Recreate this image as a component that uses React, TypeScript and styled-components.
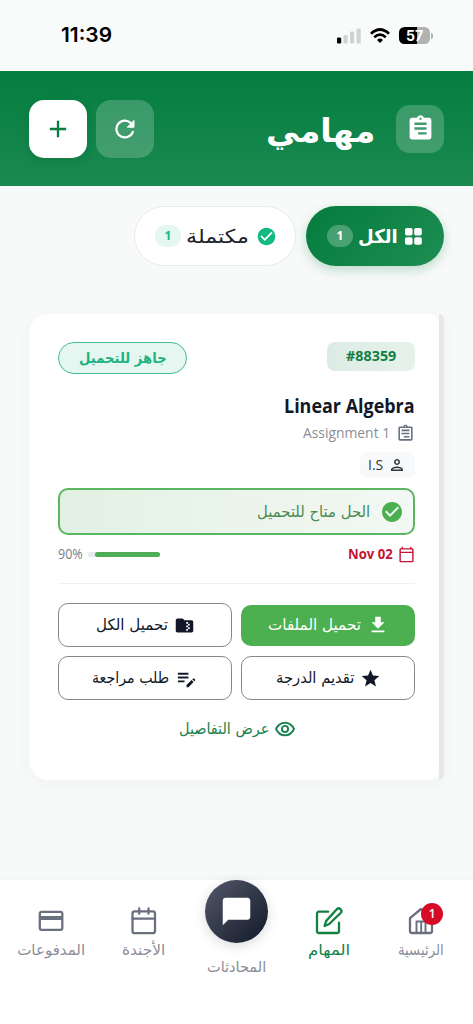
import React, { useLayoutEffect, useRef, useState } from 'react';
import styled, { createGlobalStyle, css } from 'styled-components';
import {
  MdAdd, MdAssignment, MdCheckCircle, MdChatBubble, MdEditNote, MdFolderZip,
  MdOutlineAssignment, MdOutlineCalendarToday, MdOutlinePerson, MdStar, MdDownload,
} from 'react-icons/md';

const green = '#047f40';
const ink = '#131828';
const grey = '#8b8e98';

const Global = createGlobalStyle`
  * { box-sizing: border-box; }
  body { margin: 0; background: #f8f9fa; font-family: 'Open Sans', 'DejaVu Sans', sans-serif; color: ${ink}; }
  svg { display: block; flex: none; }
  button { font: inherit; color: inherit; margin: 0; }
`;

/* Text set to a fixed measure so labels keep their width in any fallback face. */
const FitBox = styled.span<{ $w: number; $size: number; $weight: number; $face: string; $shift: number }>`
  display: inline-flex;
  flex: none;
  width: ${p => p.$w}px;
  height: ${p => p.$size}px;
  line-height: ${p => p.$size}px;
  direction: ltr;
  align-items: center;
  font-size: ${p => p.$size}px;
  font-weight: ${p => p.$weight};
  font-family: ${p => p.$face};
  margin-top: ${p => p.$shift * 2}px;
`;
const FitInner = styled.span`
  flex: none;
  white-space: nowrap;
  transform-origin: left center;
`;

const arabicFace = "'DejaVu Sans', sans-serif";
const latinFace = "'Open Sans', 'Noto Sans', sans-serif";

type FitProps = { children: string; w: number; size: number; weight?: number; shift?: number; face?: string };
function Fit({ children, w, size, weight = 400, shift, face }: FitProps) {
  const ref = useRef<HTMLSpanElement>(null);
  const [k, setK] = useState(1);
  useLayoutEffect(() => {
    if (ref.current) setK(w / ref.current.offsetWidth);
  }, [w]);
  const ar = /[\u0600-\u06ff]/.test(children);
  return (
    <FitBox $w={w} $size={size} $weight={weight} $face={face ?? (ar ? arabicFace : latinFace)} $shift={shift ?? (ar ? 0.75 : 0)}>
      <FitInner ref={ref} dir={ar ? 'rtl' : 'ltr'} style={{ transform: `scaleX(${k})` }}>{children}</FitInner>
    </FitBox>
  );
}

const Screen = styled.div`
  width: 473px;
  height: 1024px;
  display: flex;
  flex-direction: column;
  overflow: hidden;
  background: #f8faf9;
`;

const StatusBar = styled.div`
  height: 71px;
  flex: none;
  display: flex;
  align-items: center;
  justify-content: space-between;
  padding: 0 40px 0 61px;
  background: #f9fbfa;
  color: #000;
`;
const Signals = styled.div`
  display: flex;
  align-items: center;
  gap: 9px;
`;
const Battery = styled.div`
  display: flex;
  align-items: center;
  gap: 1px;
`;
const Cell = styled.div`
  width: 31px;
  height: 17px;
  border-radius: 5.5px;
  background: linear-gradient(90deg, #000 57%, #b1b3b3 57%);
  color: #fff;
  text-align: center;
  font: 700 14px/17px Inter, sans-serif;
`;
const Cap = styled.div`
  width: 2px;
  height: 6px;
  border-radius: 0 2px 2px 0;
  background: #b1b3b3;
`;

const Header = styled.header`
  height: 115px;
  flex: none;
  display: flex;
  direction: rtl;
  align-items: center;
  padding: 0 29px;
  background: linear-gradient(180deg, #047e3f, #1b8950);
`;
const TitleIcon = styled.div`
  width: 48px;
  height: 48px;
  border-radius: 14px;
  display: grid;
  place-items: center;
  background: rgba(255, 255, 255, 0.2);
  color: #fff;
  margin-left: 21px;
  svg { transform: scaleX(-1); }
`;
const Title = styled.h1`
  margin: 0;
  display: flex;
  flex: 1;
  color: #fff;
`;
const Actions = styled.div`
  display: flex;
  gap: 9px;
`;
const Action = styled.button<{ $solid?: boolean }>`
  width: 58px;
  height: 58px;
  padding: 0;
  border: 0;
  border-radius: 15px;
  display: grid;
  place-items: center;
  background: ${p => (p.$solid ? '#fff' : 'rgba(255,255,255,.2)')};
  color: ${p => (p.$solid ? green : '#fff')};
  ${p => p.$solid && css`box-shadow: 0 3px 9px rgba(0, 0, 0, 0.1);`}
`;

const Tabs = styled.div`
  display: flex;
  direction: rtl;
  gap: 10px;
  padding: 20px 29px 0;
  height: 128px;
  flex: none;
`;
const Tab = styled.button<{ $active?: boolean }>`
  width: ${p => (p.$active ? 138 : 162)}px;
  height: 60px;
  border-radius: 30px;
  display: flex;
  align-items: center;
  padding: 0 ${p => (p.$active ? 22 : 18)}px 0 0;
  border: ${p => (p.$active ? 0 : '1px solid #e8ebeb')};
  background: ${p => (p.$active ? 'linear-gradient(135deg, #047c3d, #1e8d53)' : '#fff')};
  color: ${p => (p.$active ? '#fff' : '#1c1f2c')};
  ${p => p.$active && css`box-shadow: 0 4px 12px rgba(4, 127, 64, 0.25);`}
`;
const TabText = styled.span`
  display: flex;
  margin: 0 7px 0 5px;
`;
const Count = styled.span<{ $active?: boolean }>`
  width: 26px;
  height: 22px;
  flex: none;
  border-radius: 11px;
  display: grid;
  place-items: center;
  font: 700 12px/22px 'Open Sans', sans-serif;
  background: ${p => (p.$active ? 'rgba(255,255,255,.25)' : '#e5f7f1')};
  color: ${p => (p.$active ? '#fff' : '#12b981')};
`;

const Card = styled.article`
  margin: 0 29px;
  height: 466px;
  flex: none;
  direction: rtl;
  display: flex;
  border-radius: 20px 5px 5px 20px;
  box-shadow: 0 4px 18px rgba(20, 30, 50, 0.035);
`;
const Accent = styled.div`
  width: 5px;
  flex: none;
  border-radius: 0 5px 5px 0;
  background: #e5e7e9;
`;
const CardBody = styled.div`
  flex: 1;
  min-width: 0;
  padding: 28px 24px 0 29px;
  border-radius: 20px 10px 10px 20px;
  background: #fff;
  display: flex;
  flex-direction: column;
`;
const Between = styled.div<{ $h: number; $mt?: number }>`
  display: flex;
  justify-content: space-between;
  align-items: center;
  height: ${p => p.$h}px;
  margin-top: ${p => p.$mt ?? 0}px;
`;
const IdPill = styled.div`
  width: 88px;
  height: 29px;
  align-self: flex-start;
  border-radius: 8px;
  display: grid;
  place-items: center;
  color: #117f46;
  background: linear-gradient(90deg, #dcece4, #e6f1eb);
`;
const StatePill = styled.div`
  width: 129px;
  height: 32px;
  border-radius: 16px;
  border: 1.5px solid #3fbf93;
  display: grid;
  place-items: center;
  color: #1fb381;
  background: #e6f7f2;
`;
const Line = styled.div<{ $h: number; $gap: number; $mt?: number; $color?: string }>`
  display: flex;
  align-items: center;
  height: ${p => p.$h}px;
  gap: ${p => p.$gap}px;
  margin-top: ${p => p.$mt ?? 0}px;
  color: ${p => p.$color ?? ink};
`;
const Mirror = styled.span`
  transform: scaleX(-1);
`;
const UserPill = styled.div`
  width: 55px;
  height: 26px;
  margin-top: 9px;
  border-radius: 7px;
  padding-right: 9px;
  display: flex;
  align-items: center;
  gap: 5px;
  background: #f8f9fa;
  color: #33363f;
`;
const Notice = styled.div`
  height: 47px;
  margin-top: 10px;
  border: 2px solid #5bb75f;
  border-radius: 10px;
  padding-right: 9px;
  display: flex;
  align-items: center;
  gap: 10px;
  color: #4a8a51;
  background: linear-gradient(90deg, #e2f1e3, #f3f8f4);
`;
const Track = styled.div`
  width: 72px;
  height: 5px;
  border-radius: 3px;
  background: #e6e9ee;
`;
const Fill = styled.div`
  width: 90%;
  height: 5px;
  border-radius: 3px;
  background: #4fae54;
`;
const Divider = styled.div`
  height: 1px;
  flex: none;
  margin: 19px 0;
  background: #f0f1f3;
`;
const Grid = styled.div`
  display: grid;
  grid-template-columns: 174px 174px;
  justify-content: space-between;
  gap: 9px;
`;
const Button = styled.button<{ $primary?: boolean }>`
  height: ${p => (p.$primary ? 41 : 44)}px;
  align-self: center;
  border-radius: 10px;
  border: ${p => (p.$primary ? '0' : '1.5px solid #85868f')};
  background: ${p => (p.$primary ? '#4caf50' : '#fff')};
  color: ${p => (p.$primary ? '#fff' : ink)};
  padding: 0;
  display: flex;
  align-items: center;
  justify-content: center;
  gap: 6px;
`;
const Details = styled.a`
  display: flex;
  align-items: center;
  align-self: center;
  height: 24px;
  gap: 6px;
  margin-top: 17px;
  color: #198451;
`;

const Nav = styled.nav`
  margin-top: auto;
  height: 144px;
  flex: none;
  direction: rtl;
  display: grid;
  grid-template-columns: repeat(5, 92.5px);
  padding-right: 5.5px;
  background: #fff;
  box-shadow: 0 -2px 8px rgba(20, 30, 60, 0.025);
`;
const Item = styled.a<{ $active?: boolean }>`
  display: flex;
  flex-direction: column;
  align-items: center;
  padding-top: 25px;
  gap: 4px;
  color: ${p => (p.$active ? '#10823f' : '#6b7080')};
`;
const ItemLabel = styled.span<{ $active?: boolean }>`
  display: flex;
  color: ${p => (p.$active ? '#14844a' : grey)};
`;
const IconBox = styled.span`
  position: relative;
  display: grid;
  place-items: center;
  width: 32px;
  height: 32px;
`;
const Badge = styled.span`
  position: absolute;
  left: 16px;
  top: -2px;
  width: 22px;
  height: 22px;
  border-radius: 50%;
  background: #d60b26;
  color: #fff;
  text-align: center;
  font: 600 12px/22px 'Open Sans', sans-serif;
`;
const ChatItem = styled(Item)`
  padding-top: 0;
  gap: 15px;
`;
const ChatCircle = styled.span`
  width: 63px;
  height: 63px;
  border-radius: 50%;
  display: grid;
  place-items: center;
  color: #fff;
  background: linear-gradient(135deg, #535969, #111827);
  box-shadow: 0 3px 12px rgba(17, 24, 39, 0.16);
`;

const Bars = () => (
  <svg width="24" height="16" viewBox="0 0 24 16">
    <rect x="0" y="9.5" width="4.2" height="6" rx="1.3" fill="#000" />
    <rect x="6.5" y="7" width="4.2" height="8.5" rx="1.3" fill="#d1d3d3" />
    <rect x="13" y="3.5" width="4.2" height="12" rx="1.3" fill="#d1d3d3" />
    <rect x="19.5" y="0.5" width="4.2" height="15" rx="1.3" fill="#d1d3d3" />
  </svg>
);
const Wifi = () => (
  <svg width="20" height="16" viewBox="0 0 20 16" fill="none" stroke="#000" strokeWidth="2.7">
    <path d="M1 5.7Q10-2.7 19 5.7M4.2 9.2Q10 3.9 15.8 9.2" />
    <path d="M7 11.9Q10 9.2 13 11.9L10 15Z" fill="#000" stroke="none" />
  </svg>
);
const Reload = () => (
  <svg width="20" height="20" viewBox="0 0 20 20" fill="none" stroke="#fff" strokeWidth="2.2" strokeLinecap="round">
    <path d="M17.8 12.8A8.4 8.4 0 1 1 15.6 3.9" />
    <path d="M19 1.8V8.2h-6.4Z" fill="#fff" strokeWidth="1" strokeLinejoin="round" />
  </svg>
);
const Tiles = () => (
  <svg width="17" height="17" viewBox="0 0 17 17" fill="#fff">
    <rect width="7.6" height="7.6" rx="1.8" /><rect x="9.2" width="7.6" height="7.6" rx="1.8" />
    <rect y="9.2" width="7.6" height="7.6" rx="1.8" /><rect x="9.2" y="9.2" width="7.6" height="7.6" rx="1.8" />
  </svg>
);
const Eye = () => (
  <svg width="20" height="16" viewBox="0 0 20 16" fill="none" stroke="currentColor" strokeWidth="1.9">
    <path d="M1 8C3 3.8 6.2 1.7 10 1.7S17 3.8 19 8C17 12.2 13.8 14.3 10 14.3S3 12.2 1 8Z" />
    <circle cx="10" cy="8" r="3.1" />
  </svg>
);
const navStroke = { fill: 'none', stroke: 'currentColor', strokeWidth: 2.3, strokeLinejoin: 'round' as const, strokeLinecap: 'round' as const };
const Home = () => (
  <svg width="26" height="28" viewBox="0 0 26 28" {...navStroke}>
    <path d="M2 11.2 13 2l11 9.2V24a2 2 0 0 1-2 2H4a2 2 0 0 1-2-2Z" />
    <path d="M8.5 26V14.5h9V26M13.2 14.5V26" strokeWidth="1.9" />
  </svg>
);
const Compose = () => (
  <svg width="28" height="28" viewBox="0 0 28 28" {...navStroke}>
    <path d="M13.2 4.7H4a2 2 0 0 0-2 2V24a2 2 0 0 0 2 2h18a2 2 0 0 0 2-2V15.6" />
    <path d="M21.8 2.3a2.6 2.6 0 0 1 3.8 3.7L14.2 17l-4.6 2 1.6-5.1Z" />
  </svg>
);
const Agenda = () => (
  <svg width="26" height="28" viewBox="0 0 26 28" {...navStroke}>
    <rect x="1.5" y="4.3" width="22.5" height="21.8" rx="2.2" />
    <path d="M1.5 11.7H24M8.2 1.5v5.2M17.5 1.5v5.2" />
  </svg>
);
const Payment = () => (
  <svg width="26" height="22" viewBox="0 0 26 22" {...navStroke}>
    <rect x="1.8" y="1.8" width="22.5" height="18" rx="1.8" />
    <path d="M2 8h22" strokeWidth="4" strokeLinecap="butt" />
  </svg>
);

const navItems = [
  { label: 'الرئيسية', w: 46, icon: <Home />, badge: '1' },
  { label: 'المهام', w: 42, icon: <Compose />, active: true },
  { label: 'المحادثات', w: 59, icon: <MdChatBubble size={33} />, chat: true },
  { label: 'الأجندة', w: 43, icon: <Agenda /> },
  { label: 'المدفوعات', w: 68, icon: <Payment /> },
];

export default function App() {
  return (
    <Screen>
      <Global />
      <StatusBar>
        <Fit w={51} size={20.5} weight={600} face="Inter, sans-serif">11:39</Fit>
        <Signals>
          <Bars />
          <Wifi />
          <Battery><Cell>57</Cell><Cap /></Battery>
        </Signals>
      </StatusBar>

      <Header>
        <TitleIcon><MdAssignment size={29} /></TitleIcon>
        <Title><Fit w={109} size={33} weight={700} shift={1.5}>مهامي</Fit></Title>
        <Actions>
          <Action><Reload /></Action>
          <Action $solid><MdAdd size={28} /></Action>
        </Actions>
      </Header>

      <Tabs>
        <Tab $active>
          <Tiles />
          <TabText><Fit w={40} size={19} weight={700}>الكل</Fit></TabText>
          <Count $active>1</Count>
        </Tab>
        <Tab>
          <MdCheckCircle size={21} color="#12b981" />
          <TabText><Fit w={63} size={19}>مكتملة</Fit></TabText>
          <Count>1</Count>
        </Tab>
      </Tabs>

      <Card>
        <Accent />
        <CardBody>
          <Between $h={32}>
            <IdPill><Fit w={50} size={13.5} weight={700}>#88359</Fit></IdPill>
            <StatePill><Fit w={88} size={15} weight={700} shift={0}>جاهز للتحميل</Fit></StatePill>
          </Between>
          <Line $h={24} $gap={0} $mt={20}><Fit w={131} size={20} weight={700}>Linear Algebra</Fit></Line>
          <Line $h={20} $gap={6} $mt={5} $color={grey}>
            <Mirror><MdOutlineAssignment size={19} color="#6b7080" /></Mirror>
            <Fit w={87} size={14.5}>Assignment 1</Fit>
          </Line>
          <UserPill><MdOutlinePerson size={18} /><Fit w={15} size={14}>I.S</Fit></UserPill>
          <Notice>
            <MdCheckCircle size={24} color="#4caf50" />
            <Fit w={113} size={15.5}>الحل متاح للتحميل</Fit>
          </Notice>
          <Between $h={20} $mt={9}>
            <Line $h={20} $gap={5} $color="#c41434">
              <MdOutlineCalendarToday size={17} />
              <Fit w={45} size={14} weight={700}>Nov 02</Fit>
            </Line>
            <Line $h={20} $gap={5} $color="#777b87">
              <Track><Fill /></Track>
              <Fit w={25} size={14}>90%</Fit>
            </Line>
          </Between>
          <Divider />
          <Grid>
            <Button $primary><MdDownload size={22} /><Fit w={93} size={15.5}>تحميل الملفات</Fit></Button>
            <Button><MdFolderZip size={21} /><Fit w={72} size={15.5}>تحميل الكل</Fit></Button>
            <Button><MdStar size={21} /><Fit w={78} size={15.5}>تقديم الدرجة</Fit></Button>
            <Button><MdEditNote size={23} /><Fit w={77} size={15.5}>طلب مراجعة</Fit></Button>
          </Grid>
          <Details><Eye /><Fit w={90} size={15.5}>عرض التفاصيل</Fit></Details>
        </CardBody>
      </Card>

      <Nav>
        {navItems.map(n => n.chat ? (
          <ChatItem key={n.label}>
            <ChatCircle>{n.icon}</ChatCircle>
            <ItemLabel><Fit w={n.w} size={15}>{n.label}</Fit></ItemLabel>
          </ChatItem>
        ) : (
          <Item key={n.label} $active={n.active}>
            <IconBox>{n.icon}{n.badge && <Badge>{n.badge}</Badge>}</IconBox>
            <ItemLabel $active={n.active}><Fit w={n.w} size={15}>{n.label}</Fit></ItemLabel>
          </Item>
        ))}
      </Nav>
    </Screen>
  );
}
